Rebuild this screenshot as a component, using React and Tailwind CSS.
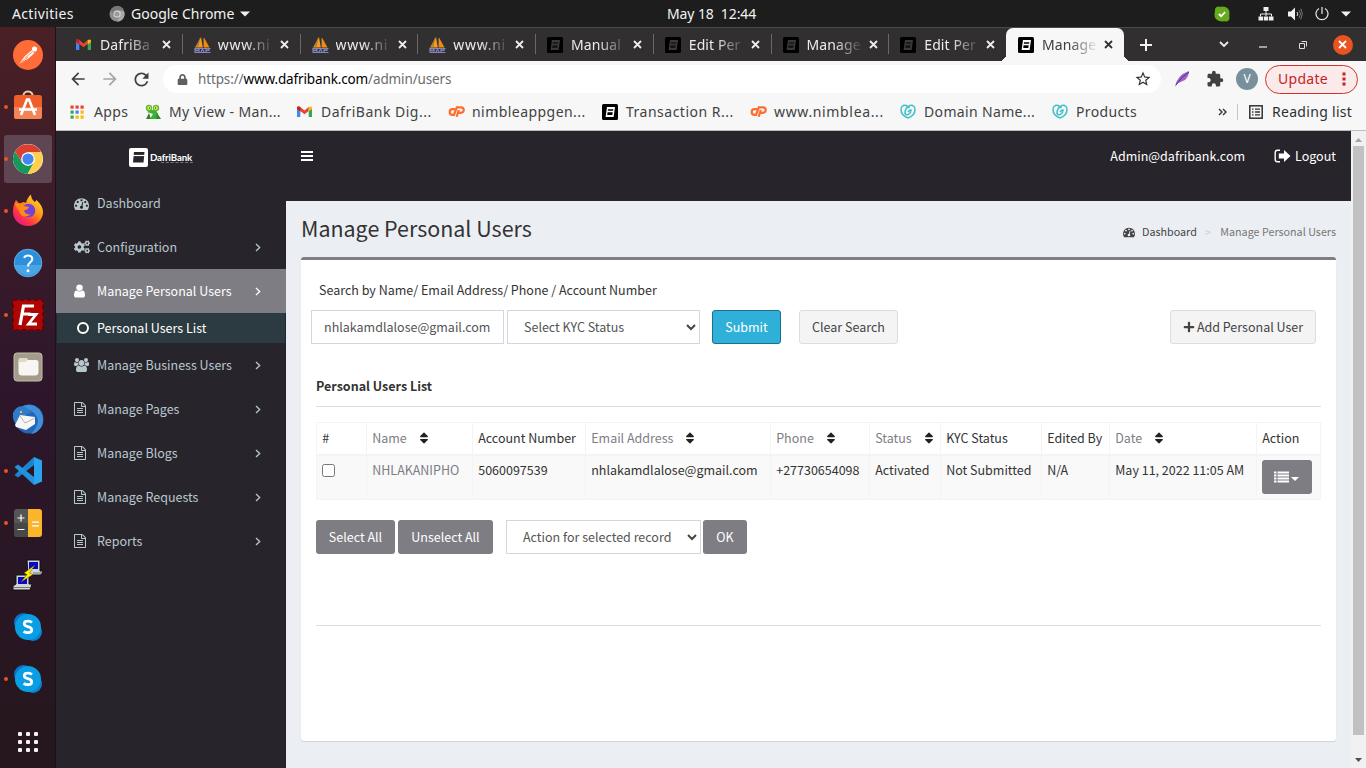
import React from 'react';
import { FaCogs, FaSort, FaPlus, FaLock } from 'react-icons/fa';
import { MdRefresh, MdArrowBack, MdArrowForward, MdStarBorder, MdExtension } from 'react-icons/md';

const Svg = ({ w = 32, h = w, vb = `0 0 ${w} ${h}`, children, className = '' }) => (
  <svg width={w} height={h} viewBox={vb} className={'shrink-0 ' + className}>{children}</svg>
);

/* ---------- desktop top bar ---------- */
function TopBar() {
  return (
    <div className="flex h-[27px] shrink-0 items-center bg-[#1d1d1d] pl-3 text-[14px] text-[#f2f2f2]">
      <div className="w-[97px] tracking-[0.35px]">Activities</div>
      <Svg w={16} className="mr-[6px]">
        <circle cx="8" cy="8" r="7.5" fill="#8e8e8e" />
        <path d="M8 4H15A7.5 7.5 0 0 0 1.7 4L4.6 9.5Z" fill="#777" />
        <path d="M15 5H9L11 10L8 15.5A7.5 7.5 0 0 0 15 5" fill="#a8a8a8" />
        <circle cx="8" cy="8" r="3.6" fill="#ddd" /><circle cx="8" cy="8" r="2.6" fill="#999" />
      </Svg>
      <div className="w-[104px] whitespace-nowrap">Google Chrome</div>
      <Svg w={10} h={6} className="ml-[5px]"><path d="M0 .5H10L5 5.5Z" fill="#f2f2f2" /></Svg>
      <div className="ml-[417px] whitespace-pre tracking-[-0.1px]">May 18  12:44</div>
      <div className="ml-auto flex items-center pr-[15px]">
        <Svg w={16} className="mr-[28px]">
          <path d="M1 4Q1 1 4 .5Q7 1 9 .5Q16 1 15.5 8Q15 10 15.5 12Q15 15.5 12 15.5Q10 15 8 15.5Q0 15 .5 8Q1 6 1 4Z" fill="#65a91c" />
          <path d="M4.8 8L7.2 10.2L11.2 6" fill="none" stroke="#fff" strokeWidth="1.8" />
        </Svg>
        <Svg w={16} h={14} className="mr-[14px]">
          <path d="M5.5 0h5v4h-5zM.5 9.5h4.5v4H.5zM5.8 9.5h4.4v4H5.8zM11 9.5h4.5v4H11z" fill="#eee" />
          <path d="M8 4v5M2.500 9.500V7h11v2.500" stroke="#eee" fill="none" />
        </Svg>
        <Svg w={15} h={14} className="mr-[12px]">
          <path d="M0 4.500h3L7 .5v13L3 9.500H0z" fill="#f2f2f2" />
          <path d="M9 5q1.600 2 0 4" stroke="#ddd" fill="none" /><path d="M11 3q3 4 0 8M12.800 1.600q3 5 0 10.800" stroke="#777" fill="none" />
        </Svg>
        <Svg w={14} h={14} className="mr-[12px]">
          <path d="M4 1.500A6 6 0 1 0 10 1.500M7 0v7" stroke="#e8e8e8" strokeWidth="1.200" fill="none" />
        </Svg>
        <Svg w={10} h={6}><path d="M0 .5H10L5 5.500Z" fill="#f2f2f2" /></Svg>
      </div>
    </div>
  );
}

/* ---------- dock icons ---------- */
const Postman = () => (
  <Svg w={30}><circle cx="15" cy="15" r="15" fill="#ff6c37" />
    <circle cx="21.500" cy="9" r="2.600" fill="#fff" />
    <path d="M6 24L12 16L18.500 10.500L21.500 13L16 18L9.500 22Z" fill="#fff" />
    <path d="M12 18L19.500 11.800M6.500 23.500L15 17" stroke="#ff6c37" strokeWidth=".8" /></Svg>
);
const Software = () => (
  <Svg w={30} h={30} className="-mt-[4px]">
    <path d="M10 8Q10 1.500 15 1.500Q20 1.500 20 8" fill="none" stroke="#e6cfa0" strokeWidth="1.800" />
    <rect x="1" y="5" width="28" height="24" rx="2.500" fill="#ee5e2a" /><path d="M1 17h28v9.500q0 2.500-2.500 2.500h-23Q1 29 1 26.500Z" fill="#f58358" />
    <path d="M8 25L14 9.500h2L22 25M6 19.500H24" fill="none" stroke="#fff" strokeWidth="2.600" />
  </Svg>
);
const ChromeIcon = () => (
  <Svg w={30} vb="0 0 48 48">
    <circle cx="24" cy="24" r="24" fill="#fff" />
    <path d="M24 13H44.800A24 24 0 0 0 3.200 12L14.500 29.500Z" fill="#d9402f" />
    <path d="M3.200 12A24 24 0 0 0 23.500 48L33.500 29.500H14.500Z" fill="#17975a" />
    <path d="M44.800 13H24L33.500 29.500L23.500 48A24 24 0 0 0 44.800 13Z" fill="#ffd04a" />
    <circle cx="24" cy="24" r="11" fill="#fff" /><circle cx="24" cy="24" r="9" fill="#4285f4" />
  </Svg>
);
const Firefox = () => (
  <Svg w={32} className="-mt-[2px]">
    <defs><linearGradient id="ff" x1="1" y1="0" x2=".2" y2="1"><stop offset="0" stopColor="#fff04a" /><stop offset=".45" stopColor="#ff980e" /><stop offset=".75" stopColor="#ff3647" /><stop offset="1" stopColor="#e31587" /></linearGradient></defs>
    <path d="M4 6L7 9.500L12 8L14 9Q15 4 19 .5Q19 5 23 8L24.500 6Q31 12 31 18A15 14 0 0 1 1 18Q1 11 4 6Z" fill="url(#ff)" />
    <circle cx="16.500" cy="16.500" r="6.800" fill="#7542d8" />
    <path d="M3 10Q8 8 12 12L17 13Q16 16 12 16.500Q13 21 19 20.500Q10 26 7 17Z" fill="#ff8a16" />
  </Svg>
);
const Help = () => (
  <Svg w={30}><circle cx="15" cy="15" r="14" fill="#2c8fdb" /><path d="M1.500 17H28.500A14 14 0 0 1 1.500 17Z" fill="#49a5e4" />
    <circle cx="15" cy="15" r="13.800" fill="none" stroke="#79bdec" strokeWidth=".7" />
    <path d="M11 9.800Q12 7.500 15 7.500Q19.300 7.500 19.300 11Q19.300 13 17 14.600Q15 16 15 18.500" fill="none" stroke="#fff" strokeWidth="2" /><circle cx="15" cy="22.800" r="1.500" fill="#fff" /></Svg>
);
const FileZilla = () => (
  <Svg w={32}><rect x="1" y="1" width="30" height="30" fill="#b00505" stroke="#6e0000" strokeWidth="2" strokeDasharray="4 3" />
    <path d="M8 26L11.500 7H22M9.500 15H18.500" fill="none" stroke="#fff" strokeWidth="3.200" />
    <path d="M16 15.500H24L16.500 25H25" fill="none" stroke="#fff" strokeWidth="2.800" /></Svg>
);
const Files = () => (
  <Svg w={30}><rect x="1" y="1" width="28" height="28" rx="3" fill="#a39c8b" stroke="#c3bdae" />
    <path d="M5.500 9Q5.500 6 8 6h5.500l1.500 2H23q2.500 0 2.500 2.500V20q0 3.500-3.500 3.500H9Q5.500 23.500 5.500 20Z" fill="#f7f6f2" />
    <path d="M5.500 9Q5.500 6 8 6h5.500q1 0 .8 1.500T12 10H6z" fill="#dcd8cb" /></Svg>
);
const Thunderbird = () => (
  <Svg w={32}><circle cx="17" cy="16" r="14.500" fill="#2465b5" />
    <path d="M8 5Q18 -2 27 6Q33 14 30 23Q26 30 19 31Q28 22 25 14Q20 5 8 5Z" fill="#3f8fdc" />
    <path d="M1 10Q5 1 13 4L20 9Q10 12 5 22Q0 18 1 10Z" fill="#2f7cca" />
    <path d="M3 22L8 12L23 14L23 21L14 27L4 24Z" fill="#f6f6f6" /><path d="M8 13L13 20L23 15" fill="none" stroke="#b5b5b5" /><circle cx="9" cy="9" r="1.200" fill="#e9b93c" /></Svg>
);
const Code = () => (
  <Svg w={30}><path d="M21 1L29 4.500V25.500L21 29Z" fill="#2aa4ee" /><path d="M21 1V9L5 21.500L1.500 19Z" fill="#1a86cf" /><path d="M21 29V21L5 8.500L1.500 11Z" fill="#2292dc" /></Svg>
);
const Calc = () => (
  <Svg w={30}><path d="M4 1H15V29H4Q1 29 1 26V4Q1 1 4 1Z" fill="#555" /><path d="M1 15h14v14H4q-3 0-3-3z" fill="#474747" /><path d="M15 1H26Q29 1 29 4V26Q29 29 26 29H15Z" fill="#fbb52a" />
    <path d="M4.500 10h7M8 6.500v7M4.500 21.500h7M19 14.200h7M19 17.800h7" stroke="#fff" strokeWidth="1.200" /></Svg>
);
const Putty = () => (
  <Svg w={32}>
    <path d="M15 1h13v11h3l-2 4H16z" fill="#d4d4d4" stroke="#111" /><rect x="17" y="3" width="9" height="7" fill="#0808c8" />
    <path d="M4 16h13v9h3l-2 6H1v-4l3-2z" fill="#d4d4d4" stroke="#111" /><rect x="6" y="18" width="9" height="7" fill="#0808c8" /><path d="M2 28.500h16M21 14h9" stroke="#777" />
    <path d="M23 6L12 14L15 15.500L9 23L21 15.500L17.500 14Z" fill="#ffef00" stroke="#544c00" strokeWidth=".5" />
  </Svg>
);
const Skype = () => (
  <Svg w={30}><circle cx="10.500" cy="10.500" r="9.500" fill="#0c72c8" /><circle cx="20" cy="20" r="9" fill="#0a80d0" /><circle cx="15" cy="15" r="13" fill="#0a9ee4" />
    <path d="M19 10.500Q17 8.900 14.500 9.200Q11.300 9.400 11.300 11.700Q11.300 13.800 14.800 14.600Q18.700 15.500 18.700 18Q18.700 20.600 15 20.700Q12.300 20.700 10.600 19.300" fill="none" stroke="#fff" strokeWidth="2.800" /></Svg>
);

const dock = [[Postman], [Software, 1], [ChromeIcon, 1, 1], [Firefox, 1], [Help], [FileZilla, 1], [Files], [Thunderbird], [Code, 1], [Calc, 1], [Putty], [Skype], [Skype, 1]];

function Dock() {
  return (
    <div className="flex w-14 shrink-0 flex-col border-r border-[#1c1119] bg-linear-to-b from-[#4a2025] via-[#2d162b] to-[#25171d] pt-[2px] pl-1">
      {dock.map(([Icon, run, active], i) => (
        <div key={i} className="flex h-[52px] shrink-0 items-center">
          <div className={'relative flex h-12 w-12 items-center justify-center rounded-[3px] ' + (active ? 'bg-[#5e4753]' : '')}>
            {run ? <span className="absolute left-0 top-[22px] h-1 w-1 rounded-full bg-[#e95420]" /> : null}
            <Icon />
          </div>
        </div>
      ))}
      <div className="mt-auto mr-1 grid w-[20px] grid-cols-3 gap-1 self-center pb-[16px]">
        {Array.from({ length: 9 }, (_, i) => <span key={i} className="h-1 w-1 rounded-[1px] bg-[#f2f2f2]" />)}
      </div>
    </div>
  );
}

/* ---------- browser chrome ---------- */
const Gmail = () => (
  <Svg w={15} h={12}><path d="M0 1.500V11h3.300V5z" fill="#4285f4" /><path d="M15 1.500V11h-3.300V5z" fill="#34a853" /><path d="M0 3V1.500Q.5 -.5 3 .8L7.500 4.500L12 .8L11.700 5L7.500 8.300L3.300 5z" fill="#ea4335" /><path d="M0 1.500Q.8 -.3 3.300 1.200V5.400L0 3z" fill="#c5221f" /><path d="M15 1.500Q14.200 -.3 11.700 1.200V5.400L15 3z" fill="#fbbc04" /></Svg>
);
const Sail = () => (
  <Svg w={17} h={16}><path d="M7 0L8.800 10.500H1Z" fill="#f89c1c" /><path d="M10 .5L15.500 10.500H10Z" fill="#f28a10" /><path d="M6 1L2.500 10.500M9.500 1v9.500M5 4L4 10.500" stroke="#8a6a4a" strokeWidth=".7" fill="none" />
    <path d="M.5 11.500H16.500M1 15V12l2 2 2-2v3M7 15l1.500-3 1.500 3M12 15v-3h3v1.500h-3M.5 15.500h16" stroke="#8586bb" strokeWidth="1.200" fill="none" /></Svg>
);
const Dafri = ({ dim }) => (
  <Svg w={16}><rect width="16" height="16" rx="1.500" fill="#000" />
    <path d="M5 3H13L11.600 13H3.600Z" fill={dim ? '#3a3a3a' : '#fff'} />
    <path d="M6 5.200H11.300L11.100 6.700H5.800ZM5.600 8.200H10.700L10.300 11H5.200Z" fill={dim ? '#161616' : '#000'} /></Svg>
);
const CPanel = () => (
  <Svg w={17} h={12}><path d="M7 3.200H4.500a2.800 2.800 0 0 0 0 5.600h1.500L8.800 1.300H13a2.600 2.600 0 0 1 0 5.500h-2.500M8.700 10.800L10.800 4" fill="none" stroke="#ff6c2c" strokeWidth="2.200" /></Svg>
);
const Heart = () => (
  <Svg w={16} h={15}><path d="M8 14Q1 11.500 1 5.500Q1.500 .5 6 1.500Q8.500 2.500 9.500 4M8 14Q15 11.500 15 5.500Q14.500 .5 10 1.500Q4.800 4 5 9.500Q6.500 12 9 10Q11 8.500 11 6Q9 6 8 8" fill="none" stroke="#3dc0c6" strokeWidth="1.500" /></Svg>
);
const Mantis = () => (
  <Svg w={17} h={16}><path d="M2 8L5 6L11 6L13 10L11 15H5L8 10Z" fill="#3fae36" /><path d="M1 15L4 9L6 15Z" fill="#2d8526" /><path d="M12 9l4 6h-5z" fill="#2d8526" />
    <circle cx="4" cy="4" r="3.200" fill="#58b94b" /><circle cx="11" cy="4" r="3.200" fill="#58b94b" /><circle cx="4.200" cy="4" r="1.900" fill="#eae435" /><circle cx="10.800" cy="4" r="1.900" fill="#eae435" /><path d="M4 3.500h1v1H4zM10 3.500h1v1h-1z" fill="#222" /></Svg>
);
const AppsGrid = () => (
  <Svg w={14}>
    {['#ea4335', '#ea4335', '#ea4335', '#34a853', '#4285f4', '#fbbc04', '#34a853', '#fbbc04', '#fbbc04'].map((c, i) => (
      <rect key={i} x={(i % 3) * 5 + 0.5} y={Math.floor(i / 3) * 5 + 0.5} width="3.200" height="3.200" fill={c} />
    ))}
  </Svg>
);
const Close = ({ c = '#eee' }) => <Svg w={9}><path d="M1 1L8 8M8 1L1 8" stroke={c} strokeWidth="1.800" /></Svg>;

const tabs = [
  [Gmail, 'DafriBa'], [Sail, 'www.ni'], [Sail, 'www.ni'], [Sail, 'www.ni'],
  [Dafri, 'Manual'], [Dafri, 'Edit Per'], [Dafri, 'Manage'], [Dafri, 'Edit Per'], [Dafri, 'Manage'],
];

function TabStrip() {
  return (
    <div className="flex h-[34px] shrink-0 items-end border-t border-[#4a4a4a] bg-[#312f30] pl-[8px] text-[14px]">
      {tabs.map(([Icon, t], i) => {
        const on = i === 8;
        return (
          <div key={i} className={'relative flex h-[33px] w-[117.75px] shrink-0 items-center pl-[12px] ' + (on ? 'rounded-t-[7px] bg-[#f7f7f7] text-[#3c3c3c]' : 'text-[#ececec]')}>
            {on && <>
              <span className="absolute bottom-0 -left-[7px] h-[7px] w-[7px] bg-[radial-gradient(circle_at_0_0,#312f30_7px,#f7f7f7_7px)]" />
              <span className="absolute -right-[7px] bottom-0 h-[7px] w-[7px] bg-[radial-gradient(circle_at_100%_0,#312f30_7px,#f7f7f7_7px)]" />
            </>}
            <div className="flex w-[24px]"><Icon dim={!on} /></div>
            <div className={'w-[54px] whitespace-nowrap [mask-image:linear-gradient(to_right,#000_50%,rgba(0,0,0,0.1)_100%)] ' + (t === 'www.ni' ? 'tracking-[0.7px]' : 'tracking-[0.1px]')}>{t}</div>
            <div className="ml-[8px] flex"><Close c={on ? '#333' : '#eee'} /></div>
            {i < 7 && <span className="absolute right-[-1px] top-[6px] h-[20px] w-px bg-[#6a6869]" />}
          </div>
        );
      })}
      <div className="flex h-[33px] grow items-center pl-[16px]">
        <Svg w={12}><path d="M6 0v12M0 6h12" stroke="#f2f2f2" strokeWidth="2" /></Svg>
        <Svg w={10} h={7} className="ml-[67px]"><path d="M1 1L5 5L9 1" fill="none" stroke="#eee" strokeWidth="1.800" /></Svg>
        <Svg w={8} h={2} className="ml-[30px] mt-[5px]"><path d="M0 1h8" stroke="#eee" strokeWidth="1.200" /></Svg>
        <Svg w={8} className="ml-[32px]"><path d="M.5 2.500h5v5h-5zM2.500 .5h5v5" fill="none" stroke="#ddd" strokeWidth="1" /></Svg>
        <div className="ml-[26px] flex h-[20px] w-[20px] items-center justify-center rounded-full bg-[#e95420]"><Close c="#fff" /></div>
      </div>
    </div>
  );
}

function Toolbar() {
  return (
    <div className="flex h-[36px] shrink-0 items-center bg-[#f7f7f7] pl-[12px] text-[#404040]">
      <MdArrowBack size={20} />
      <MdArrowForward size={20} className="ml-[12px] text-[#a5a5a5]" />
      <MdRefresh size={21} className="ml-[11px]" />
      <div className="ml-[11px] flex h-[28px] w-[998px] items-center rounded-full bg-white pl-[14px] pr-[9px] text-[13.5px] tracking-[-0.13px] text-[#6b6b6b]">
        <FaLock size={11} className="mr-[10px] text-[#606060]" />
        <div className="whitespace-nowrap">https://<span className="text-black">www.dafribank.com</span>/admin/users</div>
        <MdStarBorder size={18} className="ml-auto text-[#333]" />
      </div>
      <Svg w={16} className="ml-[14px]"><path d="M0 16Q2 4 14 0Q14 5 10 9Q6 11 3 12Z" fill="#9c62c9" /><path d="M1 14Q6 6 14 1" stroke="#5c2a92" fill="none" /></Svg>
      <MdExtension size={18} className="ml-[15px]" />
      <div className="ml-[12px] flex h-[22px] w-[22px] items-center justify-center rounded-full bg-[#78909c] text-[12px] text-white">V</div>
      <div className="ml-[7px] flex h-[29px] w-[93px] items-center rounded-full border border-[#d2342b] bg-[#fbeaea] pl-[12px] text-[14px] tracking-[0.3px] text-[#c5221f]">
        Update
        <Svg w={4} h={14} className="ml-[14px]"><path d="M.5 .5h3v3h-3zM.5 5.500h3v3h-3zM.5 10.500h3v3h-3z" fill="#c5221f" /></Svg>
      </div>
    </div>
  );
}

const Bm = ({ w, icon, children, className = '' }) => (
  <div className={'flex shrink-0 items-center whitespace-nowrap ' + w}>
    <div className="flex w-[24px] items-center">{icon}</div><span className={className}>{children}</span>
  </div>
);

function Bookmarks() {
  return (
    <div className="flex h-[33px] shrink-0 items-center bg-[#f7f7f7] pb-[4px] pl-[14px] text-[14px] tracking-[0.35px] text-[#424242]">
      <Bm w="w-[75px]" icon={<AppsGrid />}>Apps</Bm>
      <Bm w="w-[152px]" icon={<Mantis />}>My View - Man...</Bm>
      <Bm w="w-[151px]" icon={<Gmail />} className="tracking-[0.5px]">DafriBank Dig...</Bm>
      <Bm w="w-[154px]" icon={<CPanel />} className="tracking-[0.45px]">nimbleappgen...</Bm>
      <Bm w="w-[148px]" icon={<Dafri />} className="tracking-[0.5px]">Transaction R...</Bm>
      <Bm w="w-[150px]" icon={<CPanel />} className="tracking-[0.65px]">www.nimblea...</Bm>
      <Bm w="w-[152px]" icon={<Heart />}>Domain Name...</Bm>
      <Bm w="w-[166px]" icon={<Heart />}>Products</Bm>
      <Svg w={9} h={8}><path d="M1 1L4 4L1 7M5 1L8 4L5 7" fill="none" stroke="#333" strokeWidth="1.400" /></Svg>
      <div className="ml-[10px] mr-[11px] h-[16px] w-px bg-[#c6c6c6]" />
      <Svg w={14}><rect x=".8" y=".8" width="12.400" height="12.400" fill="none" stroke="#333" strokeWidth="1.500" /><path d="M3 4.200h1.500M6 4.200h5M3 7h1.500M6 7h5M3 9.800h1.500M6 9.800h5" stroke="#333" strokeWidth="1.300" /></Svg>
      <span className="ml-[9px] whitespace-nowrap tracking-[0.3px] text-[#2f2f2f]">Reading list</span>
    </div>
  );
}

/* ---------- admin page ---------- */
const Glyph = ({ w, h, vw = 1792, d, className = '' }) => <svg width={w} height={h} viewBox={`0 0 ${vw} 1792`} fill="currentColor" className={'shrink-0 ' + className}><path d={d} /></svg>;
const Gauge = ({ s = 15, className }) => <Glyph w={s} h={s} className={className} d="M384 1152q0-53-37.500-90.500t-90.500-37.500-90.500 37.500-37.500 90.500 37.500 90.500 90.500 37.500 90.500-37.500 37.500-90.500zm192-448q0-53-37.500-90.500t-90.500-37.500-90.500 37.500-37.500 90.500 37.500 90.500 90.500 37.500 90.500-37.500 37.500-90.500zm428 481l101-382q6-26-7.500-48.500t-38.500-29.500-48 6.500-30 39.500l-101 382q-60 5-107 43.500t-63 98.500q-20 77 20 146t117 89 146-20 89-117q16-60-6-117t-72-91zm660-33q0-53-37.500-90.500t-90.500-37.500-90.500 37.500-37.500 90.500 37.500 90.500 90.500 37.500 90.500-37.500 37.500-90.500zm-640-640q0-53-37.500-90.500t-90.500-37.500-90.500 37.500-37.500 90.500 37.500 90.500 90.500 37.500 90.500-37.500 37.500-90.500zm448 192q0-53-37.500-90.500t-90.500-37.500-90.500 37.500-37.500 90.500 37.500 90.500 90.500 37.500 90.500-37.500 37.500-90.500zm320 448q0 261-141 483-19 29-54 29h-1402q-35 0-54-29-141-221-141-483 0-182 71-348t191-286 286-191 348-71 348 71 286 191 191 286 71 348z" />;
const FileText = () => <Glyph w={14} h={14} d="M1468 380q28 28 48 76t20 88v1152q0 40-28 68t-68 28h-1344q-40 0-68-28t-28-68v-1600q0-40 28-68t68-28h896q40 0 88 20t76 48zm-444-244v376h376q-10-29-22-41l-313-313q-12-12-41-22zm384 1528v-1024h-416q-40 0-68-28t-28-68v-416h-768v1536h1280zm-1024-864q0-14 9-23t23-9h704q14 0 23 9t9 23v64q0 14-9 23t-23 9h-704q-14 0-23-9t-9-23v-64zm736 224q14 0 23 9t9 23v64q0 14-9 23t-23 9h-704q-14 0-23-9t-9-23v-64q0-14 9-23t23-9h704zm0 256q14 0 23 9t9 23v64q0 14-9 23t-23 9h-704q-14 0-23-9t-9-23v-64q0-14 9-23t23-9h704z" />;
const User = () => <svg width="11" height="14" viewBox="256 128 1280 1536" fill="currentColor" className="shrink-0"><path d="M1536 1399q0 109-62.500 187t-150.500 78h-854q-88 0-150.500-78t-62.500-187q0-85 8.500-160.500t31.500-152 58.500-131 94-89 134.500-34.500q131 128 313 128t313-128q76 0 134.500 34.500t94 89 58.500 131 31.500 152 8.500 160.500zm-256-887q0 159-112.500 271.500t-271.500 112.500-271.500-112.500-112.500-271.500 112.500-271.500 271.500-112.500 271.500 112.500 112.500 271.500z" /></svg>;
const Group = () => <Glyph w={15} h={14} vw={1920} d="M593 896q-162 5-265 128h-134q-82 0-138-40.500t-56-118.500q0-353 124-353 6 0 43.500 21t97.500 42.500 119 21.500q67 0 133-23-5 37-5 66 0 159 92 269zm1071 637q0 120-73 189.500t-194 69.500h-874q-121 0-194-69.500t-73-189.500q0-53 3.500-103.500t14-109 26.500-108.500 43-97.500 62-81 85.500-53.500 111.500-20q10 0 43 21.500t73 48 107 48 135 21.500 135-21.500 107-48 73-48 43-21.500q61 0 111.500 20t85.500 53.500 62 81 43 97.500 26.500 108.500 14 109 3.500 103.500zm-1024-1277q0 106-75 181t-181 75-181-75-75-181 75-181 181-75 181 75 75 181zm704 384q0 159-112.500 271.500t-271.500 112.500-271.500-112.500-112.500-271.500 112.500-271.500 271.500-112.500 271.500 112.500 112.500 271.500zm576 225q0 78-56 118.500t-138 40.500h-134q-103-123-265-128 92-110 92-269 0-29-5-66 66 23 133 23 59 0 119-21.500t97.500-42.500 43.500-21q124 0 124 353zm-128-609q0 106-75 181t-181 75-181-75-75-181 75-181 181-75 181 75 75 181z" />;
const Chevron = () => <Svg w={6} h={9}><path d="M1 1L4.700 4.500L1 8" fill="none" stroke="currentColor" strokeWidth="1.300" /></Svg>;

function NavItem({ icon, label, on, arrow = true }) {
  return (
    <div className={'flex h-[44px] items-center pl-[18px] pr-[25px] ' + (on ? 'bg-[#7e7d84] text-white' : 'text-[#b8c7ce]')}>
      <div className="flex w-[23px]">{icon}</div>
      <span className="grow">{label}</span>
      {arrow && <Chevron />}
    </div>
  );
}

function Sidebar() {
  return (
    <div className="w-[230px] shrink-0 bg-[#28242b]">
      <div className="flex h-[50px] items-center pl-[73px] pt-[3px] text-white">
        <Svg w={19}><rect width="19" height="19" rx="2" fill="#fff" /><path d="M5 4H15.500L14.500 14.500H4Z" fill="#28242b" /><path d="M3.500 7.500H16" stroke="#fff" strokeWidth="1.200" /></Svg>
        <div className="ml-[2px] flex flex-col">
          <span className="font-[Lato] text-[9.700px] font-bold leading-[10px] tracking-[-0.15px]">DafriBank</span>
          <span className="ml-[11px] w-[32px] border-t border-dashed border-[#77747a]" />
        </div>
      </div>
      <NavItem icon={<Gauge />} label="Dashboard" arrow={false} />
      <NavItem icon={<FaCogs size={16} />} label="Configuration" />
      <NavItem icon={<User />} label="Manage Personal Users" on />
      <div className="mx-px flex h-[30px] items-center bg-[#2c3b41] pl-[20px] text-white">
        <Svg w={12} className="mr-[8px]"><circle cx="6" cy="6" r="5" fill="none" stroke="#fff" strokeWidth="2" /></Svg>
        Personal Users List
      </div>
      <NavItem icon={<Group />} label="Manage Business Users" />
      <NavItem icon={<FileText />} label="Manage Pages" />
      <NavItem icon={<FileText />} label="Manage Blogs" />
      <NavItem icon={<FileText />} label="Manage Requests" />
      <NavItem icon={<FileText />} label="Reports" />
    </div>
  );
}

const Select = ({ w, children }) => (
  <div className={'flex h-[34px] items-center justify-between border border-[#d2d6de] bg-white pl-[16px] pr-[3px] text-[#555] ' + w}>
    <span>{children}</span>
    <Svg w={10} h={7}><path d="M1 1L5 5L9 1" fill="none" stroke="#444" strokeWidth="2" /></Svg>
  </div>
);
const Button = ({ w, children, look }) => <button className={'flex h-[34px] items-center justify-center rounded-[3px] whitespace-nowrap ' + w + ' ' + look}>{children}</button>;
const gray = 'bg-[#7e7d84] text-white';
const light = 'border border-[#ddd] bg-[#f4f4f4] text-[#444]';

const columns = [
  ['#', 'w-[50px]'], ['Name', 'w-[106px]', 1], ['Account Number', 'w-[113px]'], ['Email Address', 'w-[185px]', 1], ['Phone', 'w-[99px]', 1],
  ['Status', 'w-[71px]', 1], ['KYC Status', 'w-[101px]'], ['Edited By', 'w-[68px]'], ['Date', 'w-[147px]', 1], ['Action', 'w-[64px]'],
];
const row = ['5060097539', 'nhlakamdlalose@gmail.com', '+27730654098', 'Activated', 'Not Submitted', 'N/A', 'May 11, 2022 11:05 AM'];
const cell = 'border border-[#f4f4f4] pl-[5.200px] pr-[4px] text-left';

function Users() {
  return (
    <table className="mt-[15px] w-[1005px] table-fixed border-collapse whitespace-nowrap">
      <thead>
        <tr className="h-[32px]">
          {columns.map(([t, w, sort]) => (
            <th key={t} className={cell + ' border-b-2 font-normal ' + w + (sort ? ' text-[#7e7d84]' : '')}>
              <div className="flex items-center">{t}{sort && <FaSort size={14} className="ml-[10px] text-[#222]" />}</div>
            </th>
          ))}
        </tr>
      </thead>
      <tbody>
        <tr className="h-[45px] bg-[#f9f9f9] align-top">
          <td className={cell + ' pt-[8px]'}><div className="h-[13px] w-[13px] rounded-[2.500px] border border-[#767676] bg-white" /></td>
          <td className={cell + ' pt-[4px] text-[#7e7d84]'}>NHLAKANIPHO</td>
          {row.map((t) => <td key={t} className={cell + ' pt-[4px]'}>{t}</td>)}
          <td className={cell + ' pt-[4px]'}>
            <Button w="w-[50px] -ml-[0.300px]" look={gray}>
              <Svg w={15} h={12} className="-ml-[1px]">
                <path d="M0 .5h2.500v2H0zM3.500 .5H15v2H3.500zM0 3.500h2.500v2H0zM3.500 3.500H15v2H3.500zM0 6.500h2.500v2H0zM3.500 6.500H15v2H3.500zM0 9.500h2.500v2H0zM3.500 9.500H15v2H3.500z" fill="#fff" />
              </Svg>
              <Svg w={8} h={4} className="ml-[2px] mt-[4px]"><path d="M0 0H8L4 4Z" fill="#fff" /></Svg>
            </Button>
          </td>
        </tr>
      </tbody>
    </table>
  );
}

function Page() {
  return (
    <div className="flex grow border-t border-[#bdbdbd] font-['Noto_Sans_CJK_SC',sans-serif] text-[12.500px] leading-[20px] text-[#333]">
      <Sidebar />
      <div className="flex grow flex-col bg-[#ebeff4]">
        <div className="flex h-[70px] shrink-0 items-start bg-[#28242b] pl-[15px] pr-[15px] pt-[15px] text-white">
          <Svg w={12} h={10} className="mt-[5px]"><path d="M0 0h12v2H0zM0 4h12v2H0zM0 8h12v2H0z" fill="#fff" /></Svg>
          <span className="ml-auto">Admin@dafribank.com</span>
          <Svg w={17} h={14} className="ml-[29px] mr-[4px] mt-[3px]"><path d="M6 1.200H3.500Q1.200 1.200 1.200 3.500V10.500Q1.200 12.800 3.500 12.800H6" fill="none" stroke="#fff" strokeWidth="1.400" /><path d="M4.800 4.600H10V1L16.500 7L10 13V9.400H4.800Z" fill="#fff" /></Svg>
          <span>Logout</span>
        </div>
        <div className="flex h-[56px] shrink-0 justify-between px-[15px]">
          <h1 className="pt-[13px] text-[21.450px] leading-[28px]">Manage Personal Users</h1>
          <div className="flex items-center pt-[6px] text-[10.750px] text-[#444]">
            <Gauge s={12} className="mr-[7.500px]" />Dashboard
            <span className="ml-[8px] mr-[9.500px] text-[#ccc]">&gt;</span><span className="text-[#777]">Manage Personal Users</span>
          </div>
        </div>
        <div className="mx-[15px] h-[484px] rounded-[3px] border-t-[3px] border-[#7e7d84] bg-white px-[15px] shadow-[0_1px_1px_rgba(0,0,0,0.12)]">
          <div className="pl-[3px] pt-[20px]">Search by Name/ Email Address/ Phone / Account Number</div>
          <div className="-ml-[5px] mt-[10px] flex pr-[5px]">
            <div className="flex h-[34px] w-[193px] items-center border border-[#d2d6de] px-3 text-[#555]">nhlakamdlalose@gmail.com</div>
            <div className="ml-[3px]"><Select w="w-[193px]">Select KYC Status</Select></div>
            <Button w="ml-[12px] w-[69px]" look="border border-[#1d708a] bg-[#2fb0d8] text-white">Submit</Button>
            <Button w="ml-[18px] w-[99px]" look={light}>Clear Search</Button>
            <Button w="ml-auto w-[146px]" look={light}><FaPlus size={12} className="mr-[2px]" />Add Personal User</Button>
          </div>
          <div className="mt-[32px] h-[31px] border-b border-[#ddd] font-bold">Personal Users List</div>
          <Users />
          <div className="mt-[20px] flex">
            <Button w="w-[79px]" look={gray}>Select All</Button>
            <Button w="ml-[3px] w-[95px]" look={gray}>Unselect All</Button>
            <div className="ml-[13px]"><Select w="w-[195px]">Action for selected record</Select></div>
            <Button w="ml-[2px] w-[44px]" look={gray}>OK</Button>
          </div>
          <div className="mt-[71px] border-t border-[#ddd]" />
        </div>
      </div>
      <div className="flex w-[15px] shrink-0 flex-col items-center bg-[#f1f1f1]">
        <Svg w={7} h={4} className="mt-[7px]"><path d="M0 4H7L3.500 0Z" fill="#a3a3a3" /></Svg>
        <div className="mt-[4px] h-[589px] w-[11px] bg-[#c1c1c1]" />
        <Svg w={7} h={4} className="mt-[23px]"><path d="M0 0H7L3.500 4Z" fill="#505050" /></Svg>
      </div>
    </div>
  );
}

export default function App() {
  return (
    <div className="flex h-[768px] w-[1366px] flex-col overflow-hidden font-['Noto_Sans',sans-serif] leading-[20px]">
      <TopBar />
      <div className="flex min-h-0 grow">
        <Dock />
        <div className="flex min-w-0 grow flex-col">
          <TabStrip />
          <Toolbar />
          <Bookmarks />
          <Page />
        </div>
      </div>
    </div>
  );
}
